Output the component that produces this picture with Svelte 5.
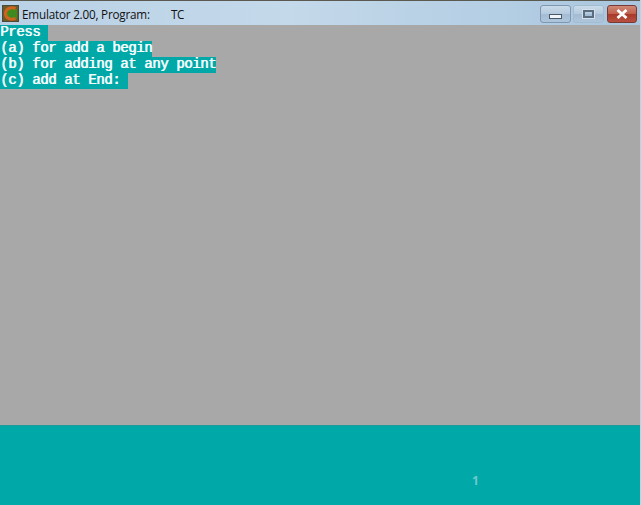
<script>
	const lines = ['Press ', '(a) for add a begin', '(b) for adding at any point', '(c) add at End: '];
</script>

<main class="window">
	<header class="titlebar">
		<svg class="app-icon" width="17" height="17" viewBox="0 0 17 17">
			<rect x="0.5" y="0.5" width="16" height="16" fill="#6b5a2a" stroke="#4a4a3a" />
			<rect x="5" y="4" width="10" height="10" fill="#3f8a1e" />
			<path d="M13.5 3.5 C8 1.5 3.5 4 3.5 8.5 C3.5 13 8 15.5 13.5 13.5" fill="none" stroke="#d0641e" stroke-width="3" />
		</svg>
		<span class="title">Emulator 2.00, Program:</span>
		<span class="title prog">TC</span>
		<div class="controls">
			<button class="ctl" aria-label="Minimize"><span class="min"></span></button>
			<button class="ctl" aria-label="Maximize"><span class="max"></span></button>
			<button class="ctl close" aria-label="Close">
				<svg width="14" height="10" viewBox="0 0 14 10">
					<path d="M2.5 1 L11.5 9 M11.5 1 L2.5 9" stroke="#fff" stroke-width="2.8" />
				</svg>
			</button>
		</div>
	</header>

	<section class="screen">
		{#each lines as line}
			<div class="line"><span>{line}</span></div>
		{/each}
	</section>

	<footer class="status">
		<span class="count">1</span>
	</footer>
</main>

<style>
	:global(body) {
		margin: 0;
		background: #a8a8a8;
	}

	.window {
		width: 641px;
		height: 505px;
		box-sizing: border-box;
		border-right: 1px solid #a8dcec;
		display: flex;
		flex-direction: column;
		overflow: hidden;
		background: #a8a8a8;
	}

	.titlebar {
		height: 25px;
		box-sizing: border-box;
		flex: none;
		display: flex;
		align-items: center;
		padding: 1px 0 0 2px;
		border-top: 1px solid #5a5a50;
		background: linear-gradient(90deg, #b9d1e6 0%, #c4d9ea 45%, #b3cde3 80%, #a9c6de 100%);
	}

	.app-icon {
		flex: none;
	}

	.title {
		font: 11.7px "Open Sans", "Noto Sans", sans-serif;
		letter-spacing: -0.2px;
		color: #111;
		margin-left: 3px;
		white-space: nowrap;
	}

	.prog {
		margin-left: 21px;
	}

	.controls {
		margin-left: auto;
		margin-right: 3px;
		display: flex;
		gap: 2px;
	}

	.ctl {
		width: 31px;
		height: 18px;
		padding: 0;
		display: flex;
		align-items: center;
		justify-content: center;
		border: 1px solid #7f97b0;
		border-radius: 3px;
		background: linear-gradient(180deg, #c9dbea 0%, #b5cade 48%, #a3bcd3 52%, #aec6db 100%);
	}

	.ctl + .ctl {
		border-color: #a5bbd0;
	}

	.min {
		width: 11px;
		height: 3px;
		margin-top: 6px;
		background: #f2f5f8;
		border: 1px solid #46586c;
	}

	.max {
		width: 7px;
		height: 4px;
		background: transparent;
		border: 2px solid #5a6c80;
		box-shadow: 0 0 0 1px #d5e0ea;
	}

	.ctl.close {
		width: 30px;
		margin-left: 1px;
		border-color: #7a3a34;
		background: linear-gradient(180deg, #d08a78 0%, #c0604e 48%, #a83a2a 52%, #b85040 100%);
	}

	.screen {
		flex: 1;
		background: #a8a8a8;
		font: 14px/14px "Liberation Mono", monospace;
		letter-spacing: -0.4px;
		color: #f4fbfb;
		text-shadow: 0.7px 0 #f4fbfb;
		white-space: pre;
	}

	.line {
		height: 16px;
	}

	.line span {
		display: inline-block;
		height: 16px;
		background: #00a8a8;
		vertical-align: top;
	}

	.status {
		flex: none;
		height: 80px;
		position: relative;
		background: #00a8a8;
		border-top: 1px solid #1f9a9a;
		box-sizing: border-box;
	}

	.count {
		position: absolute;
		left: 472px;
		top: 46px;
		font: bold 12px "Open Sans", sans-serif;
		color: #70c8cc;
	}
</style>
